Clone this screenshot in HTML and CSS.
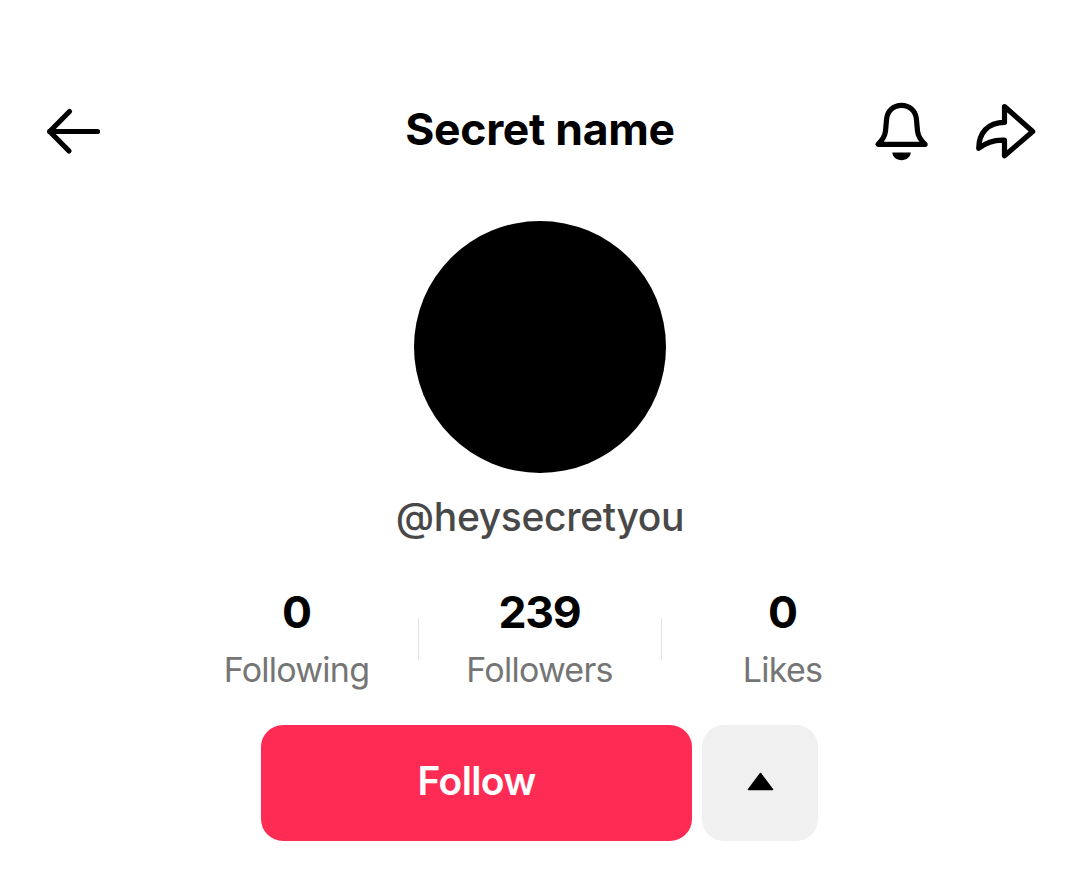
FILE: index.html
```html
<!DOCTYPE html>
<html lang="en">
<head>
<meta charset="utf-8">
<title>Secret name</title>
<link rel="stylesheet" href="styles.css">
</head>
<body>
<header class="topbar">
  <svg class="icon-back" viewBox="10 10 60 60" aria-label="Back"><path d="M39.500 21.500L19.700 41.500L39 61"/><path d="M19.700 41.500H67.500"/></svg>
  <h1 class="title">Secret name</h1>
  <div class="actions">
    <svg class="icon-bell" viewBox="870 100 64 64" aria-label="Notifications"><path class="line" d="M878 144.300H925.100C920.500 140 918 136 917.500 131L916.400 119C915.700 111 909.500 105.300 901.500 105.300S887.300 111 886.600 119L885.500 131C885 136 882.500 140 878 144.300Z"/><path d="M892.300 152.600H910.800C910.300 157.200 906.500 160.200 901.500 160.200S892.800 157.200 892.300 152.600Z"/></svg>
    <svg class="icon-share" viewBox="974 100 64 64" aria-label="Share"><path class="line" d="M1004.500 106.500L1032.700 131.500L1004.500 155.700V140.100C994 139.500 986 142.500 978.700 148.300C979 133 987.500 122.500 1004.500 122.300Z"/></svg>
  </div>
</header>
<main class="profile">
  <div class="avatar"></div>
  <p class="handle">@heysecretyou</p>
  <div class="stats">
    <div class="stat"><strong class="count">0</strong><span class="label">Following</span></div>
    <i class="rule"></i>
    <div class="stat"><strong class="count">239</strong><span class="label">Followers</span></div>
    <i class="rule"></i>
    <div class="stat"><strong class="count">0</strong><span class="label">Likes</span></div>
  </div>
  <div class="buttons">
    <button class="follow">Follow</button>
    <button class="more" aria-label="More"><svg class="icon-up" viewBox="0 0 28 20"><path d="M14.500 1.500L26.500 17.500H2.500Z"/></svg></button>
  </div>
</main>
</body>
</html>
```
FILE: styles.css
```css
* { box-sizing: border-box; }
body {
  margin: 0;
  height: 877px;
  background: #fff;
  color: #000;
  font-family: Inter, "Liberation Sans", sans-serif;
  overflow: hidden;
}
svg { display: block; }
.topbar {
  display: grid;
  grid-template-columns: 168px 1fr 168px;
  height: 221px;
  padding: 100px 41px 0 40px;
  align-items: start;
}
.icon-back {
  width: 60px;
  height: 60px;
  fill: none;
  stroke: #000;
  stroke-width: 5.2;
  stroke-linecap: round;
  stroke-linejoin: round;
}
.title {
  margin: 0;
  padding-left: 2px;
  text-align: center;
  font-size: 44.5px;
  line-height: 58px;
  font-weight: 700;
  letter-spacing: -0.3px;
}
.actions { display: flex; gap: 40px; }
.icon-bell, .icon-share { width: 64px; height: 64px; flex: none; }
.line {
  fill: none;
  stroke: #000;
  stroke-width: 5.2;
  stroke-linecap: round;
  stroke-linejoin: round;
}
.profile { display: flex; flex-direction: column; align-items: center; }
.avatar { width: 252px; height: 252px; border-radius: 50%; background: #000; margin-left: 1px; }
.handle {
  margin: 19px 0 0;
  padding-left: 1px;
  font-size: 39px;
  line-height: 50px;
  font-weight: 500;
  letter-spacing: -0.35px;
  color: #484848;
}
.stats { display: flex; align-items: center; height: 110px; margin-top: 42px; }
.stat { width: 242px; display: flex; flex-direction: column; align-items: center; padding-bottom: 2px; }
.count { font-size: 44.5px; line-height: 54px; font-weight: 700; letter-spacing: -1.2px; }
.label { font-size: 34px; line-height: 44px; margin-top: 9px; color: #757575; font-weight: 400; letter-spacing: -0.75px; }
.rule { width: 1px; height: 42px; background: #e2e2e2; }
.buttons { display: flex; gap: 10px; margin-top: 31px; }
button { border: 0; padding: 0; font-family: inherit; height: 116px; border-radius: 22px; }
.follow {
  width: 431px;
  padding-bottom: 6px;
  background: #fe2c55;
  color: #fff;
  font-size: 39px;
  font-weight: 600;
  letter-spacing: -0.6px;
}
.more { width: 116px; padding-bottom: 2px; background: #f0f0f0; display: grid; place-items: center; }
.icon-up { width: 28px; height: 20px; stroke: #000; stroke-width: 1.5; stroke-linejoin: round; }
```
